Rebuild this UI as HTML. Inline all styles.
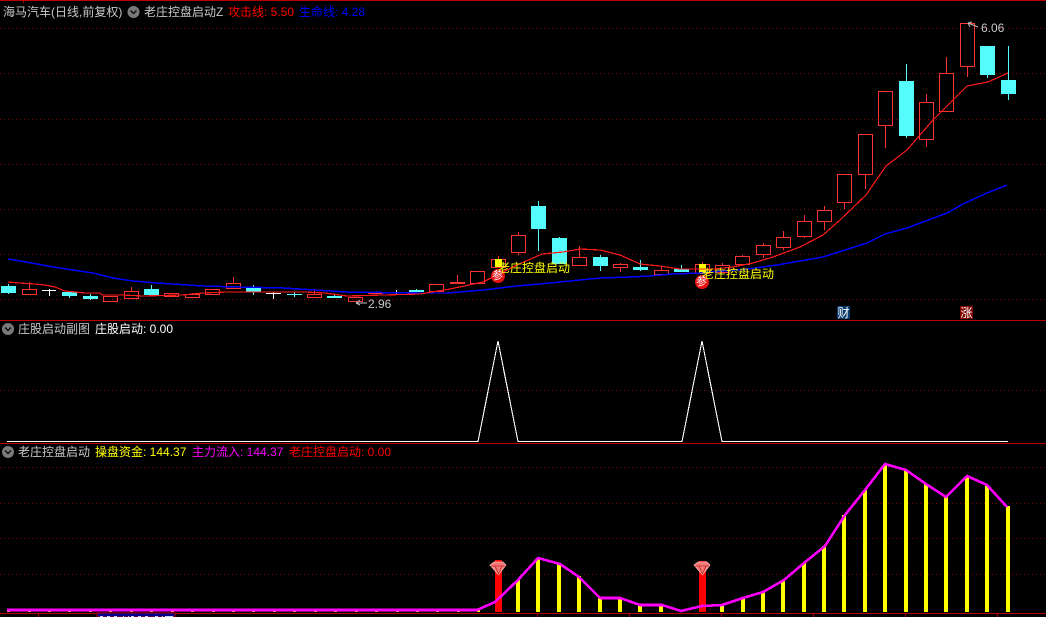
<!DOCTYPE html>
<html><head><meta charset="utf-8"><style>
html,body{margin:0;padding:0;background:#000;width:1046px;height:617px;overflow:hidden}
#w{position:relative;width:1046px;height:617px;overflow:hidden;background:#000}
svg{position:absolute;left:0;top:0}
.g{position:absolute;left:0;width:1046px;height:1px;background:repeating-linear-gradient(90deg,#800000 0,#800000 1px,#000 1px,#000 4px)}
.t{position:absolute;font:12px/14px "Liberation Sans","WenQuanYi Zen Hei","Noto Sans CJK SC",sans-serif;white-space:nowrap;color:#c8c8c8}
.b{position:absolute;width:13px;height:13px;font:12px/13px "WenQuanYi Zen Hei","Noto Sans CJK SC",sans-serif;color:#fff;text-align:center}
</style></head><body><div id="w">
<div class="g" style="top:28px"></div><div class="g" style="top:73px"></div><div class="g" style="top:119px"></div><div class="g" style="top:164px"></div><div class="g" style="top:209px"></div><div class="g" style="top:254px"></div><div class="g" style="top:299px"></div><div class="g" style="top:390px"></div><div class="g" style="top:467px"></div><div class="g" style="top:503px"></div><div class="g" style="top:538px"></div><div class="g" style="top:574px"></div>
<svg width="1046" height="617" viewBox="0 0 1046 617" fill="none">
<g shape-rendering="crispEdges">
<path d="M0 0.5H1046M23.5 0V3M0 320.5H1046M0 443.5H1046M0 613.5H1046M38.5 614V617M537.5 614V617M629.5 614V617M721.5 614V617M813.5 614V617M905.5 614V617M997.5 614V617" stroke="#b80000"/>
<!-- cyan candles -->
<path fill="#54fcfc" d="M1 286h15v7H1zM62 292h15v4H62zM83 296h15v3H83zM144 289h15v6h-15zM246 288h15v4h-15zM287 294h15v1h-15zM327 296h15v2h-15zM409 290h15v2h-15zM531 206h15v23h-15zM552 238h15v26h-15zM593 257h15v9h-15zM633 267h15v3h-15zM674 269h15v3h-15zM899 81h15v55h-15zM980 46h15v29h-15zM1001 80h15v14h-15z"/>
<path stroke="#54fcfc" d="M8.5 284V294M69.5 296V298M90.5 294V300M151.5 285V289M253.5 285V295M294.5 292V297M334.5 294V296M416.5 289V293M538.5 201V251M559.5 237V238M600.5 255V271M640.5 260V271M681.5 265V269M906.5 64V138M987.5 75V78M1008.5 46V100"/>
<!-- white doji -->
<path stroke="#fff" d="M42 290.5H56M49.5 289V296M266 293.5H281M273.5 292V299M389 292.5H404M396.5 290V294"/>
<!-- red candles -->
<path stroke="#ff3232" d="M22.5 289.5h14v5h-14zM29.5 282V289M103.5 296.5h14v5h-14zM124.5 291.5h14v7h-14zM131.5 287V291M164.5 293.5h14v3h-14zM185.5 294.5h14v3h-14zM192.5 293V294M205.5 289.5h14v5h-14zM226.5 283.5h14v5h-14zM233.5 277V283M307.5 294.5h14v3h-14zM314.5 289V294M348.5 297.5h14v4h-14zM368.5 292.5h14v1h-14zM429.5 284.5h14v7h-14zM450.5 282.5h14v1h-14zM457.5 275V282M470.5 271.5h14v12h-14zM491.5 259.5h14v8h-14zM498.5 256V259M511.5 235.5h14v17h-14zM518.5 232V235M518.5 253V255M572.5 257.5h14v8h-14zM579.5 246V257M613.5 264.5h14v3h-14zM620.5 263V264M620.5 268V272M654.5 270.5h14v4h-14zM661.5 267V270M695.5 264.5h14v9h-14zM702.5 262V264M715.5 265.5h14v7h-14zM722.5 263V265M735.5 256.5h14v8h-14zM742.5 255V256M756.5 245.5h14v9h-14zM763.5 243V245M763.5 255V258M776.5 237.5h14v10h-14zM783.5 231V237M783.5 248V250M797.5 221.5h14v15h-14zM804.5 215V221M804.5 237V238M817.5 210.5h14v11h-14zM824.5 206V210M824.5 222V230M837.5 174.5h14v28h-14zM844.5 203V209M858.5 134.5h14v40h-14zM865.5 175V189M878.5 91.5h14v34h-14zM885.5 126V148M919.5 102.5h14v37h-14zM926.5 94V102M926.5 140V147M939.5 73.5h14v38h-14zM946.5 57V73M960.5 23.5h14v43h-14zM967.5 67V77"/>
<rect x="495" y="259" width="7" height="8" fill="#ffff00"/>
<rect x="699" y="264" width="7" height="10" fill="#ffff00"/>
<!-- yellow volume bars -->
<path fill="#ffff00" d="M516 580h4v32h-4zM536 558h4v54h-4zM557 564h4v48h-4zM577 576h4v36h-4zM598 597h4v15h-4zM618 597h4v15h-4zM638 604h4v8h-4zM659 605h4v7h-4zM720 604h4v8h-4zM741 598h4v14h-4zM761 592h4v20h-4zM781 580h4v32h-4zM802 563h4v49h-4zM822 546h4v66h-4zM842 515h4v97h-4zM863 490h4v122h-4zM883 464h4v148h-4zM904 470h4v142h-4zM924 484h4v128h-4zM944 497h4v115h-4zM965 476h4v136h-4zM985 485h4v127h-4zM1006 506h4v106h-4z"/>
<path fill="#ffff00" d="M7 609h3v3H7zM28 610h3v2h-3zM48 610h3v2h-3zM68 610h3v2h-3zM89 610h3v2h-3zM109 610h3v2h-3zM130 610h3v2h-3zM150 610h3v2h-3zM171 610h3v2h-3zM191 610h3v2h-3zM212 610h3v2h-3zM232 610h3v2h-3zM252 610h3v2h-3zM273 610h3v2h-3zM293 610h3v2h-3zM314 610h3v2h-3zM334 610h3v2h-3zM355 610h3v2h-3zM375 610h3v2h-3zM396 610h3v2h-3zM416 610h3v2h-3zM436 610h3v2h-3zM457 610h3v2h-3zM477 610h3v2h-3zM680 610h3v2h-3z"/>
<rect x="495" y="560" width="7" height="52" fill="#ff0000"/>
<rect x="699" y="561" width="7" height="51" fill="#ff0000"/>
<rect x="97" y="613" width="78" height="4" fill="#000090" stroke="#b80000"/>
<path stroke="#c8d0f0" d="M100 616.500h3M107 616.500h3M114 616.500h3M123 616.500h1M128 616.500h1M131 616.500h3M138 616.500h3M145 616.500h3M155 616.500h3M162 616.500h1M165 616.500h8"/>
</g>
<!-- MA lines -->
<g shape-rendering="crispEdges">
<polyline stroke="#0000ff" stroke-width="1.500" points="8,259 20,261 37,264 53,267 73,270 93,273 113,278 133,281 157,283 203,286 240,287 283,288 347,292 417,293 447,293 483,290 517,286 550,283 600,278 630,277 650,276 673,274 700,273 747,269 777,265 823,257 867,243 885,234 907,228 947,213 963,204 987,193 1007,185"/>
<polyline stroke="#ff1a1a" stroke-width="1.200" points="8,282 19,283 35,284 45,285 55,287 65,291 75,292 85,293 100,293 102,295 123,295 143,296 182,295 203,293 227,292 305,292 325,293 347,296 420,294 450,289 483,282 497,275 517,265 542,254 563,252 580,249 600,250 620,255 640,264 660,266 680,269 713,269 733,267 753,263 773,257 800,247 823,235 840,220 866,195 886,166 907,150 933,120 967,86 988,82 1008,73"/>
<polyline stroke="#fff" stroke-width="1.100" points="7,441.500 478,441.500 498,341 518,441.500 682,441.500 702,341 722,441.500 1008,441.500"/>
<polyline stroke="#ff00ff" stroke-width="2.600" stroke-linejoin="round" points="7,610 477,610 495,602 518,580 538,558 560,564 579,577 600,598 620,598 640,605 662,605 681,611 702,606 722,605 743,598 763,592 784,580 804,563 825,546 845,515 865,490 885,464 906,470 926,484 946,497 967,476 987,485 1007,507"/>
</g>
<!-- gems -->
<g>
<path d="M490 565L494 562H503L506 565L498.500 575Z" fill="#f07a78" stroke="#ffc0b8" stroke-width=".7"/><path d="M491 566H505M495 566L498.500 574L502 566" stroke="#c82828" stroke-width=".8"/>
<path d="M694 565L698 562H707L710 565L702.500 575Z" fill="#f07a78" stroke="#ffc0b8" stroke-width=".7"/><path d="M695 566H709M699 566L702.500 574L706 566" stroke="#c82828" stroke-width=".8"/>
</g>
<circle cx="498" cy="276" r="7" fill="#e81010"/>
<circle cx="702" cy="282" r="7" fill="#e81010"/>
<!-- header arrow icons -->
<circle cx="133.500" cy="12" r="6" fill="#7a7a7a"/><path d="M130.500 10.500L133.500 13.500L136.500 10.500" stroke="#111" stroke-width="1.500"/>
<circle cx="8" cy="329" r="6" fill="#7a7a7a"/><path d="M5 327.500L8 330.500L11 327.500" stroke="#111" stroke-width="1.500"/>
<circle cx="8" cy="452" r="6" fill="#7a7a7a"/><path d="M5 450.500L8 453.500L11 450.500" stroke="#111" stroke-width="1.500"/>
<!-- low/high arrows -->
<path d="M367 303H356M356 303L360 300M356 303L360 305" stroke="#c0c0c0"/>
<path d="M978 27L968 23M968 23L972 22M968 23L970 27" stroke="#c0c0c0"/>
</svg>
<div class="t" style="left:3px;top:5px">海马汽车(日线,前复权)</div>
<div class="t" style="left:144px;top:5px">老庄控盘启动Z</div>
<div class="t" style="left:228px;top:5px;color:#ff0000">攻击线: 5.50</div>
<div class="t" style="left:299px;top:5px;color:#0000ff">生命线: 4.28</div>
<div class="t" style="left:18px;top:322px">庄股启动副图</div>
<div class="t" style="left:95px;top:322px;color:#fff">庄股启动: 0.00</div>
<div class="t" style="left:18px;top:445px">老庄控盘启动</div>
<div class="t" style="left:95px;top:445px;color:#ffff00">操盘资金: 144.37</div>
<div class="t" style="left:192px;top:445px;color:#ff00ff">主力流入: 144.37</div>
<div class="t" style="left:289px;top:445px;color:#ff0000">老庄控盘启动: 0.00</div>
<div class="t" style="left:498px;top:261px;color:#ffff00">老庄控盘启动</div>
<div class="t" style="left:702px;top:267px;color:#ffff00">老庄控盘启动</div>
<div class="t" style="left:368px;top:297px">2.96</div>
<div class="t" style="left:981px;top:21px">6.06</div>
<div class="b" style="left:837px;top:306px;background:#0a3a6a">财</div>
<div class="b" style="left:960px;top:306px;background:#800000">涨</div>
<div class="b" style="left:491px;top:269px;color:#fff;font-size:11px">参</div>
<div class="b" style="left:695px;top:275px;color:#fff;font-size:11px">参</div>
</div></body></html>
